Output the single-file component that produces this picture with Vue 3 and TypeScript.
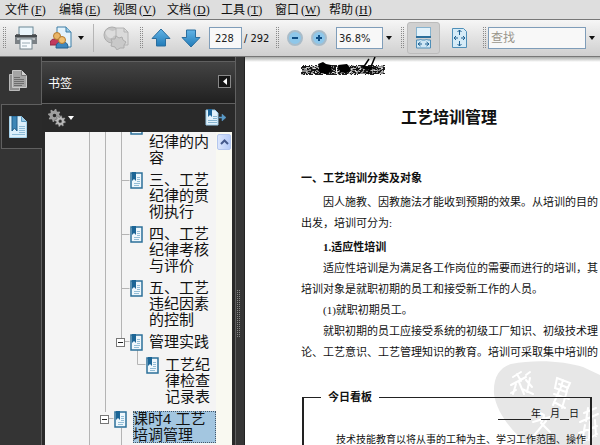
<script setup lang="ts">
import { ref } from 'vue'

interface MenuEntry {
  label: string
  key: string
}

interface Bookmark {
  title: string
  depth: number
  expander?: boolean
  selected?: boolean
  continued?: boolean
}

const menus: MenuEntry[] = [
  { label: '文件', key: 'F' },
  { label: '编辑', key: 'E' },
  { label: '视图', key: 'V' },
  { label: '文档', key: 'D' },
  { label: '工具', key: 'T' },
  { label: '窗口', key: 'W' },
  { label: '帮助', key: 'H' },
]

const bookmarks: Bookmark[] = [
  { title: '纪律的内容', depth: 3, continued: true },
  { title: '三、工艺纪律的贯彻执行', depth: 3 },
  { title: '四、工艺纪律考核与评价', depth: 3 },
  { title: '五、工艺违纪因素的控制', depth: 3 },
  { title: '管理实践', depth: 3, expander: true },
  { title: '工艺纪律检查记录表', depth: 4 },
  { title: '课时4 工艺培调管理', depth: 2, expander: true, selected: true },
]

const page = ref('228')
const zoom = ref('36.8%')
const query = ref('')

// Ink specks of the scribbled-over header line, from a small fixed-seed generator.
function specks(count: number, light: boolean): string {
  let seed = light ? 91 : 17
  const next = () => {
    seed = (seed * 1103515245 + 12345) % 2147483648
    return seed / 2147483648
  }
  let d = ''
  for (let i = 0; i < count; i++) {
    const x = Math.floor(next() * 83)
    const y = 8 + Math.floor(next() * 10)
    const w = 1 + Math.floor(next() * 2)
    d += `M${x} ${y}h${w}v1h-${w}z`
  }
  return d
}
const darkSpecks = specks(520, false)
const lightSpecks = specks(110, true)

// Outline of a cog: square teeth round a body, with the axle hole cut out.
function cog(cx: number, cy: number, outer: number, inner: number, hole: number, teeth: number): string {
  const points: string[] = []
  for (let i = 0; i < teeth * 4; i++) {
    const r = i % 4 < 2 ? outer : inner
    const a = ((i + 0.5) / (teeth * 4)) * Math.PI * 2
    points.push(`${(cx + r * Math.cos(a)).toFixed(2)} ${(cy + r * Math.sin(a)).toFixed(2)}`)
  }
  return (
    `M${points.join('L')}z` +
    `M${cx - hole} ${cy}a${hole} ${hole} 0 1 0 ${hole * 2} 0a${hole} ${hole} 0 1 0 ${-hole * 2} 0z`
  )
}
const largeCog = cog(6.5, 6.5, 6.5, 4.8, 1.8, 8)
const smallCog = cog(12.2, 12.2, 5.6, 4, 1.5, 8)
</script>

<template>
  <div class="app">
    <nav class="menubar" aria-label="菜单">
      <button v-for="m in menus" :key="m.key" type="button" class="menu">
        {{ m.label }}<span class="key">(<u>{{ m.key }}</u>)</span>
      </button>
    </nav>

    <div class="toolbar" role="toolbar">
      <span class="handle"></span>
      <button type="button" class="tool print" aria-label="打印">
        <svg width="24" height="24" viewBox="0 0 24 24">
          <rect x="5" y="1" width="14" height="9" fill="#eaf5fb" stroke="#6a8795" />
          <path d="M2 8h4v2h12V8h4v10H2z" fill="#66696c" />
          <path d="M1 9h22v9H1z" fill="#7c8185" />
          <path d="M1 9h22v2H1z" fill="#45494c" />
          <rect x="3" y="12" width="18" height="2" fill="#b9bec1" />
          <rect x="6" y="13" width="12" height="10" fill="#f7fbfd" stroke="#75848c" />
          <path d="M8 17h8M8 20h5" stroke="#9aabb4" />
        </svg>
      </button>
      <button type="button" class="tool share" aria-label="协作">
        <svg width="24" height="24" viewBox="0 0 24 24">
          <path d="M7 1h9l5 5v15H7z" fill="#e4f3fb" stroke="#3d7da5" />
          <path d="M16 1v5h5" fill="#9acbe6" stroke="#3d7da5" />
          <path d="M0 19c0-5 2-6 5-6s5 1 5 6z" fill="#c23a5e" stroke="#922743" />
          <circle cx="7" cy="10" r="3.500" fill="#e9b465" stroke="#b37a2f" />
          <path d="M6 22c0-5 2-6 6-6s6 1 6 6z" fill="#3f87bd" stroke="#25618f" />
          <circle cx="12" cy="14" r="3.500" fill="#f0c071" stroke="#b37a2f" />
        </svg>
        <svg class="caret" width="6" height="4" viewBox="0 0 6 4"><path d="M0 0h6L3 4z" fill="#111" /></svg>
      </button>
      <span class="rule"></span>
      <button type="button" class="tool globe" aria-label="联机" disabled>
        <svg width="26" height="24" viewBox="0 0 26 24">
          <circle cx="9" cy="9" r="8" fill="#c6c6c6" stroke="#adadad" />
          <path d="M3 5c4-3 5 1 7 0s4-2 5 1-4 3-5 5-5 1-6-1-2-2-1-5z" fill="#dcdcdc" />
          <path d="M13 2h8l4 4v13H13z" fill="#dadada" stroke="#b4b4b4" />
          <path d="M21 2v4h4" fill="none" stroke="#b4b4b4" />
          <path d="M13 10l3 2 3-1 1 3 3 2-2 3 0 3-4 0-3 2-2-3-4-1 1-4-1-3 4 0z" fill="#c9c9c9" stroke="#adadad" />
        </svg>
      </button>
      <span class="handle"></span>
      <button type="button" class="tool prev" aria-label="上一页">
        <svg width="20" height="20" viewBox="0 0 20 20">
          <defs>
            <linearGradient id="arrow" x1="0" y1="0" x2="0" y2="1">
              <stop offset="0" stop-color="#63b4e6" /><stop offset="1" stop-color="#217bb8" />
            </linearGradient>
          </defs>
          <path d="M10 1l9 9.500h-4.500V18h-9v-7.500H1z" fill="url(#arrow)" stroke="#2b6e9f" />
        </svg>
      </button>
      <button type="button" class="tool next" aria-label="下一页">
        <svg width="20" height="20" viewBox="0 0 20 20">
          <path d="M10 19l9-9.500h-4.500V2h-9v7.500H1z" fill="url(#arrow)" stroke="#2b6e9f" />
        </svg>
      </button>
      <input v-model="page" class="field page-no" aria-label="页码" />
      <span class="total">/ 292</span>
      <span class="handle"></span>
      <button type="button" class="tool round" aria-label="缩小">
        <svg width="16" height="16" viewBox="0 0 16 16">
          <circle cx="8" cy="8" r="7" fill="#8ec7ea" stroke="#a9bcc9" stroke-width="2" />
          <path d="M5 8h6" stroke="#0f4f86" stroke-width="2" />
        </svg>
      </button>
      <button type="button" class="tool round" aria-label="放大">
        <svg width="16" height="16" viewBox="0 0 16 16">
          <circle cx="8" cy="8" r="7" fill="#8ec7ea" stroke="#a9bcc9" stroke-width="2" />
          <path d="M5 8h6M8 5v6" stroke="#0f4f86" stroke-width="2" />
        </svg>
      </button>
      <label class="combo">
        <select v-model="zoom" class="field zoom" aria-label="缩放比例">
          <option>36.8%</option>
        </select>
        <svg width="6" height="4" viewBox="0 0 6 4"><path d="M0 0h6L3 4z" fill="#111" /></svg>
      </label>
      <span class="handle"></span>
      <button type="button" class="tool fit pressed" aria-label="适合宽度">
        <svg width="18" height="22" viewBox="0 0 18 22">
          <rect x="1.500" y="0.500" width="14" height="9" fill="#e3f2fb" stroke="#86b3cf" />
          <path d="M1 10h15" stroke="#2c6f9c" stroke-width="2" />
          <path d="M1.500 21V13h3l1-1 1 1h4l1-1 1 1h3v8z" fill="#cfe7f5" stroke="#4f8fb8" />
          <path d="M3 17h4M10 17h4M5.500 15l-2.500 2 2.500 2M11.500 15l2.500 2-2.500 2" fill="none" stroke="#1d5f90" />
        </svg>
      </button>
      <button type="button" class="tool fit" aria-label="适合页面">
        <svg width="18" height="22" viewBox="0 0 18 22">
          <path d="M1.500 1.500h11l3 3v16h-14z" fill="#d5ebf7" stroke="#4f8fb8" />
          <path d="M8.500 3v5M8.500 14v5M3 11h4M10 11h4M6.500 5l2-2 2 2M6.500 17l2 2 2-2M5 9l-2 2 2 2M12 9l2 2-2 2" fill="none" stroke="#1d5f90" />
        </svg>
      </button>
      <span class="handle"></span>
      <label class="combo search">
        <input v-model="query" class="field find" placeholder="查找" aria-label="查找" />
        <svg width="6" height="4" viewBox="0 0 6 4"><path d="M0 0h6L3 4z" fill="#111" /></svg>
      </label>
    </div>

    <main class="workspace">
      <nav class="tabs" aria-label="导航面板">
        <button type="button" class="tab" aria-label="页面">
          <svg width="18" height="22" viewBox="0 0 18 22">
            <path d="M0.500 4.500h10v16h-10z" fill="#8f8f8f" stroke="#b9b9b9" />
            <path d="M3.500 0.500h9l5 5v12h-14z" fill="#a5a5a5" stroke="#c9c9c9" />
            <path d="M12.500 0.500v5h5" fill="#d0d0d0" stroke="#777" />
            <path d="M5 7.500h6M5 9.500h10M5 11.500h10M5 13.500h10M5 15.500h8" stroke="#6e6e6e" />
          </svg>
        </button>
        <button type="button" class="tab active" aria-label="书签">
          <svg width="18" height="22" viewBox="0 0 18 22">
            <path d="M0.500 0.500h12l5 5v16h-17z" fill="#dceffa" stroke="#a6d3ec" />
            <path d="M12.500 0.500v5h5" fill="#9ccbe7" stroke="#5c9cc3" />
            <path d="M3 0h5v15l-2.500-3-2.500 3z" fill="#3d86b6" stroke="#1f5d89" />
            <path d="M10 10.500h6M10 12.500h6M10 14.500h6M10 16.500h6M3 18.500h13" stroke="#8dbbd7" />
          </svg>
        </button>
        <span class="edge"></span>
      </nav>

      <aside class="panel">
        <header class="panel-head">
          <h2>书签</h2>
          <button type="button" class="collapse" aria-label="折叠">
            <svg width="4" height="7" viewBox="0 0 4 7"><path d="M4 0v7L0 3.500z" fill="#fff" /></svg>
          </button>
        </header>
        <div class="panel-tools">
          <button type="button" class="tool gears" aria-label="选项">
            <svg width="18" height="18" viewBox="0 0 18 18" fill-rule="evenodd">
              <path :d="largeCog" fill="#9f9f9f" />
              <path :d="smallCog" fill="#b9b9b9" stroke="#555" stroke-width="0.500" />
            </svg>
            <svg width="6" height="4" viewBox="0 0 6 4"><path d="M0 0h6L3 4z" fill="#fff" /></svg>
          </button>
          <button type="button" class="tool" aria-label="新建书签">
            <svg width="21" height="18" viewBox="0 0 21 18">
              <path d="M1 1h9l3 3v12H1z" fill="#e2f2fb" stroke="#9ccbe8" />
              <path d="M3 0h4v8l-2-2-2 2z" fill="#1c659a" />
              <path d="M8 7.500h4M8 9.500h4M3 11.500h9M3 13.500h9" stroke="#86b4d0" />
              <path d="M14 8h3V5l4 3.500-4 3.500V9h-3z" fill="#5a9bc8" stroke="#5a9bc8" stroke-width="0.500" />
            </svg>
          </button>
        </div>
        <div class="tree-frame">
          <div class="tree-view">
            <svg class="guides" width="170" height="313" viewBox="0 0 170 313" fill="none" stroke="#b4b4b4">
              <path d="M44.500 0v313M60.500 0v280M76.500 0v208M76.500 48.500h8M76.500 102.500h8M76.500 156.500h8M76.500 209.500h8M92.500 217v15.500h8M60.500 286.500h8M76.500 296v17" />
            </svg>
            <ul class="tree">
              <li
                v-for="b in bookmarks"
                :key="b.title"
                :class="['node', `depth-${b.depth}`, { continued: b.continued }]"
              >
                <span class="expand-slot">
                  <button v-if="b.expander" type="button" class="expander" aria-label="收起"></button>
                </span>
                <svg class="mark" width="13" height="17" viewBox="0 0 13 17">
                  <path d="M1 1h11v15H1z" fill="#eef7fc" stroke="#2d7099" stroke-width="1.500" />
                  <path d="M2 0h4v9L4 7 2 9z" fill="#1b6596" />
                  <path d="M7 5.500h3M7 7.500h3M7 9.500h3M4 11.500h6M4 13.500h5" stroke="#93bdd6" />
                </svg>
                <a href="#" :class="{ selected: b.selected }">{{ b.title }}</a>
              </li>
            </ul>
          </div>
          <div class="scrollbar">
            <button type="button" aria-label="向上滚动">
              <svg width="9" height="6" viewBox="0 0 9 6"><path d="M1 5l3.500-3.500L8 5" fill="none" stroke="#44598c" stroke-width="2" /></svg>
            </button>
          </div>
        </div>
      </aside>

      <div class="splitter"><span class="grip"></span></div>

      <article class="page">
        <svg class="stamp" width="107" height="90" viewBox="0 0 107 90">
          <path d="M1 34C0 18 6 8 18 4 42-1 72 1 90 7L107 15V90H42C24 77 4 56 1 34z" fill="#e7e7e7" />
          <g fill="none" stroke="#fff" stroke-width="2" stroke-linecap="round">
            <path d="M20 17l8-5M24 14l4 7M18 25l15-8M23 24l-3 10M26 22l5 12M18 33l5-3M33 15l4-3M33 20l6 7M37 18l-3 14M29 29l11 5" />
            <path d="M64 18l13 5-4 9-11-4zM66 24l9 4M70 20l-3 10M61 34l15 5M66 31l-6 14M74 31l-5 17M61 42l11 6" />
            <path d="M45 52l6 3M40 62l17-5M51 56l-3 7 9 9M53 61l-14 17" />
            <path d="M91 53l12-5M95 48l-2 13M87 62l18-8M92 65l-3 17M97 62l-1 18M102 60l1 16M86 73l18-7M90 82l14-8" />
          </g>
        </svg>
        <svg class="scribble" width="88" height="20" viewBox="0 0 88 20">
          <path d="M1 9h34v8H1zM36 9h47v8H36z" fill="#555" opacity="0.700" />
          <path :d="darkSpecks" fill="#0a0a0a" opacity="0.900" />
          <path :d="lightSpecks" fill="#fff" opacity="0.700" />
          <path d="M17 7l5-2 3 2 5 1 1 6-5 3-7-1zM37 8l9-1 4 5-4 4-7-1z" fill="#000" />
          <path d="M68 2l-6 9 6 1M74 0l-7 17M61 10l13 1" fill="none" stroke="#000" stroke-width="1.500" />
        </svg>
        <h1>工艺培训管理</h1>
        <h2>一、工艺培训分类及对象</h2>
        <p>因人施教、因教施法才能收到预期的效果。从培训的目的出发，培训可分为:</p>
        <h3>1.适应性培训</h3>
        <p>适应性培训是为满足各工作岗位的需要而进行的培训，其培训对象是就职初期的员工和接受新工作的人员。</p>
        <p>(1)就职初期员工。</p>
        <p>就职初期的员工应接受系统的初级工厂知识、初级技术理论、工艺意识、工艺管理知识的教育。培训可采取集中培训的</p>
        <fieldset class="board">
          <legend>今日看板</legend>
          <div class="date">
            <span class="blank long"></span>年<span class="blank"></span>月<span class="blank"></span>日
          </div>
          <p>技术技能教育以将从事的工种为主、学习工作范围、操作</p>
        </fieldset>
      </article>
    </main>
  </div>
</template>

<style>
body {
  margin: 0;
  overflow: hidden;
}
</style>

<style scoped>
.app {
  display: flex;
  flex-direction: column;
  height: 100vh;
  overflow: hidden;
  background: #2e2e2e;
  color: #111;
  font-family: "DejaVu Sans Condensed", "Noto Sans CJK SC", sans-serif;
  font-size: 12px;
}
* {
  box-sizing: border-box;
}
button {
  border: 0;
  padding: 0;
  background: none;
  font: inherit;
  color: inherit;
}
svg {
  display: block;
  flex: none;
}
.menubar {
  display: flex;
  flex: none;
  height: 19px;
  padding-left: 5px;
  background: #dedede;
}
.menu {
  width: 54px;
  font-family: "Liberation Serif", "Noto Sans CJK SC", serif;
  line-height: 18px;
  text-align: left;
  white-space: nowrap;
}
.key {
  padding-left: 2px;
}
.toolbar {
  display: flex;
  flex: none;
  align-items: center;
  height: 38px;
  padding: 0 5px 0 2px;
  border-top: 1px solid #777;
  border-bottom: 1px solid #777;
  background: linear-gradient(#f6f6f6, #e6e6e6 40%, #cfcfcf);
}
.handle {
  flex: none;
  width: 4px;
  height: 22px;
  background: conic-gradient(#8a8a8a 25%, transparent 0) 0 0 / 2px 2px;
}
.tool {
  display: flex;
  flex: none;
  align-items: center;
}
.print {
  margin-left: 8px;
}
.share {
  gap: 4px;
  margin-left: 12px;
}
.rule {
  width: 1px;
  height: 28px;
  margin: 0 9px;
  background: #b5b5b5;
}
.globe {
  margin-right: 10px;
}
.prev {
  margin-left: 8px;
}
.next {
  margin: 0 8px 0 10px;
}
.field {
  height: 22px;
  margin: 0;
  border: 1px solid #7f9db9;
  border-radius: 0;
  background: #f8f8f8;
  color: #222;
  font: 11px "DejaVu Sans Condensed", "Noto Sans CJK SC", sans-serif;
  appearance: none;
  outline: none;
}
.page-no {
  flex: none;
  width: 33px;
  padding: 0 5px;
}
.total {
  flex: none;
  width: 33px;
  padding-left: 2px;
  font-size: 11px;
  white-space: nowrap;
}
.round {
  margin-left: 8px;
}
.combo {
  display: flex;
  align-items: center;
  gap: 3px;
  margin: 0 8px 0 9px;
}
.zoom {
  width: 47px;
  padding: 0 2px;
}
.fit {
  justify-content: center;
  width: 33px;
  height: 32px;
  margin-left: 3px;
  border: 1px solid transparent;
  border-radius: 3px;
}
.pressed {
  border-color: #bcbcbc;
  background: #d0d0d0;
}
.fit + .handle {
  margin-left: 6px;
}
.search {
  flex: 1;
  min-width: 0;
  margin: 0 0 0 2px;
}
.find {
  flex: 1;
  width: 0;
  min-width: 0;
  padding: 0 2px;
  font-size: 12px;
}
.find::placeholder {
  color: #9a968c;
  opacity: 1;
}
.workspace {
  display: flex;
  flex: 1;
  min-height: 0;
}
.tabs {
  display: flex;
  flex: none;
  flex-direction: column;
  width: 42px;
  background: #343434;
}
.tab {
  display: flex;
  flex: none;
  align-items: center;
  height: 47px;
  padding-left: 9px;
  border-right: 1px solid #606060;
}
.active {
  height: 45px;
  margin-left: 1px;
  padding-left: 7px;
  border: 1px solid #606060;
  border-right: 0;
  background: #2a2a2a;
}
.edge {
  flex: 1;
  border-right: 1px solid #606060;
}
.panel {
  display: flex;
  flex: none;
  flex-direction: column;
  width: 194px;
  padding-top: 4px;
  border-right: 1px solid #606060;
  background: #292929;
}
.panel-head {
  display: flex;
  flex: none;
  align-items: center;
  justify-content: space-between;
  height: 43px;
  padding: 0 4px 0 6px;
  border-top: 1px solid #606060;
  border-bottom: 1px solid #606060;
  background: linear-gradient(#444, #202020);
}
.panel-head h2 {
  margin: 0;
  color: #fff;
  font-size: 12px;
  font-weight: 400;
}
.collapse {
  display: flex;
  align-items: center;
  justify-content: center;
  width: 13px;
  height: 13px;
  margin-bottom: 3px;
  border: 1px solid #888;
  background: #161616;
}
.panel-tools {
  display: flex;
  flex: none;
  align-items: center;
  justify-content: space-between;
  height: 28px;
  padding: 0 9px 0 6px;
}
.gears {
  gap: 2px;
}
.tree-frame {
  display: flex;
  flex: 1;
  min-height: 0;
  margin: 0 3px;
  background: #f4f4f4;
}
.tree-view {
  position: relative;
  flex: 1;
  overflow: hidden;
}
.guides {
  position: absolute;
  top: 0;
  left: 0;
}
.tree {
  position: relative;
  display: flex;
  flex-direction: column;
  gap: 6px;
  margin: -14px 0 0;
  padding: 0 0 0 52px;
  list-style: none;
}
.node {
  display: flex;
  align-items: flex-start;
}
.depth-3 {
  padding-left: 16px;
}
.depth-4 {
  padding-left: 32px;
}
.expand-slot {
  flex: none;
  width: 17px;
  padding-top: 4px;
}
.expander {
  display: block;
  width: 9px;
  height: 9px;
  margin-left: 3px;
  border: 1px solid #777;
  background: linear-gradient(#222, #222) center / 5px 1px no-repeat #fff;
}
.node a {
  flex: 1;
  margin-left: 6px;
  outline-offset: -1px;
  color: #111;
  font-family: "Liberation Sans", "Noto Sans CJK SC", sans-serif;
  font-size: 15px;
  line-height: 16px;
  text-decoration: none;
}
.continued a {
  padding-top: 16px;
}
.node .selected {
  outline: 1px dotted #44586a;
  background: #a3c6e0;
}
.scrollbar {
  display: flex;
  flex: none;
  align-items: flex-start;
  justify-content: center;
  width: 16px;
  padding-top: 2px;
  background: #f9f9f1;
}
.scrollbar button {
  display: flex;
  align-items: center;
  justify-content: center;
  width: 14px;
  height: 16px;
  border: 1px solid #b4c6ee;
  border-radius: 2px;
  background: linear-gradient(90deg, #dbe6fd, #b6cbf8);
}
.splitter {
  flex: none;
  width: 9px;
  padding-top: 233px;
  border-right: 1px solid #222;
  background: #363636;
}
.grip {
  display: block;
  width: 4px;
  height: 48px;
  background: conic-gradient(#8a8a8a 25%, transparent 0) 0 0 / 2px 2px;
}
.page {
  position: relative;
  flex: 1;
  min-width: 0;
  overflow: hidden;
  padding: 0 1px 0 56px;
  background: linear-gradient(#a9aba9, #fff 5px);
  font-family: "Liberation Serif", "Noto Sans CJK SC", serif;
  font-size: 11px;
  line-height: 21px;
}
.stamp {
  position: absolute;
  top: 303px;
  right: 0;
}
.page > :not(.stamp) {
  position: relative;
}
.page h1 {
  margin: 29px 0 38px;
  padding-left: 100px;
  font-size: 16px;
  line-height: 24px;
}
.page h2 {
  margin: 0 0 3px;
  font-size: 11px;
}
.page h3 {
  margin: 3px 0 0;
  font-size: 11px;
  text-indent: 22px;
}
.page p {
  margin: 0;
  text-indent: 22px;
}
.board {
  min-width: 0;
  margin: 24px 7px 0 1px;
  padding: 0 0 20px;
  border: 2px solid #222;
  border-top-width: 1px;
}
.board legend {
  margin-left: 17px;
  padding: 0 7px;
  font-weight: 700;
}
.date {
  display: flex;
  justify-content: flex-end;
  padding-right: 11px;
  font-size: 10px;
  line-height: 12px;
}
.blank {
  width: 9px;
  border-bottom: 1px solid #222;
}
.long {
  width: 33px;
}
.page .board p {
  margin: 12px 0 0 32px;
  font-size: 10px;
  line-height: 16px;
  text-indent: 0;
}
</style>
